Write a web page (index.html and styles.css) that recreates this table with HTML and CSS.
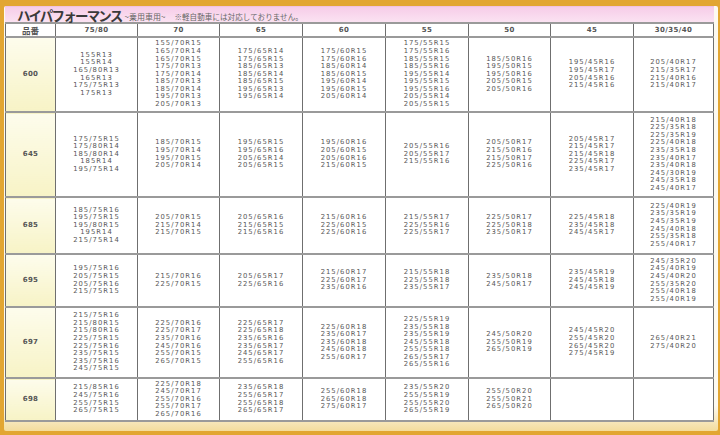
FILE: index.html
```html
<!DOCTYPE html>
<html lang="ja">
<head>
<meta charset="utf-8">
<link rel="stylesheet" href="styles.css">
</head>
<body>
<div class="frame">
  <div class="titlebar">
    <span class="title">ハイパフォーマンス</span>
    <span class="sub">~乗用車用~</span>
    <span class="note">※軽自動車には対応しておりません。</span>
  </div>
  <table class="chart">
    <colgroup>
      <col class="c-id"><col class="c82"><col class="c82"><col class="c83"><col class="c83"><col class="c83"><col class="c82"><col class="c83"><col class="c80">
    </colgroup>
    <thead>
      <tr class="head">
        <th class="jp">品番</th><th>75/80</th><th>70</th><th>65</th><th>60</th><th>55</th><th>50</th><th>45</th><th>30/35/40</th>
      </tr>
    </thead>
    <tbody>
      <tr class="r600">
        <td class="id">600</td>
        <td>155R13<br>155R14<br>165/80R13<br>165R13<br>175/75R13<br>175R13</td>
        <td>155/70R15<br>165/70R14<br>165/70R15<br>175/70R13<br>175/70R14<br>185/70R13<br>185/70R14<br>195/70R13<br>205/70R13</td>
        <td>175/65R14<br>175/65R15<br>185/65R13<br>185/65R14<br>185/65R15<br>195/65R13<br>195/65R14</td>
        <td>175/60R15<br>175/60R16<br>185/60R14<br>185/60R15<br>195/60R14<br>195/60R15<br>205/60R14</td>
        <td>175/55R15<br>175/55R16<br>185/55R15<br>185/55R16<br>195/55R14<br>195/55R15<br>195/55R16<br>205/55R14<br>205/55R15</td>
        <td>185/50R16<br>195/50R15<br>195/50R16<br>205/50R15<br>205/50R16</td>
        <td>195/45R16<br>195/45R17<br>205/45R16<br>215/45R16</td>
        <td>205/40R17<br>215/35R17<br>215/40R16<br>215/40R17</td>
      </tr>
      <tr class="r645">
        <td class="id">645</td>
        <td>175/75R15<br>175/80R14<br>185/80R14<br>185R14<br>195/75R14</td>
        <td>185/70R15<br>195/70R14<br>195/70R15<br>205/70R14</td>
        <td>195/65R15<br>195/65R16<br>205/65R14<br>205/65R15</td>
        <td>195/60R16<br>205/60R15<br>205/60R16<br>215/60R15</td>
        <td>205/55R16<br>205/55R17<br>215/55R16</td>
        <td>205/50R17<br>215/50R16<br>215/50R17<br>225/50R16</td>
        <td>205/45R17<br>215/45R17<br>215/45R18<br>225/45R17<br>235/45R17</td>
        <td>215/40R18<br>225/35R18<br>225/35R19<br>225/40R18<br>235/35R18<br>235/40R17<br>235/40R18<br>245/30R19<br>245/35R18<br>245/40R17</td>
      </tr>
      <tr class="r685">
        <td class="id">685</td>
        <td>185/75R16<br>195/75R15<br>195/80R15<br>195R14<br>215/75R14</td>
        <td>205/70R15<br>215/70R14<br>215/70R15</td>
        <td>205/65R16<br>215/65R15<br>215/65R16</td>
        <td>215/60R16<br>225/60R15<br>225/60R16</td>
        <td>215/55R17<br>225/55R16<br>225/55R17</td>
        <td>225/50R17<br>225/50R18<br>235/50R17</td>
        <td>225/45R18<br>235/45R18<br>245/45R17</td>
        <td>225/40R19<br>235/35R19<br>245/35R19<br>245/40R18<br>255/35R18<br>255/40R17</td>
      </tr>
      <tr class="r695">
        <td class="id">695</td>
        <td>195/75R16<br>205/75R15<br>205/75R16<br>215/75R15</td>
        <td>215/70R16<br>225/70R15</td>
        <td>205/65R17<br>225/65R16</td>
        <td>215/60R17<br>225/60R17<br>235/60R16</td>
        <td>215/55R18<br>225/55R18<br>235/55R17</td>
        <td>235/50R18<br>245/50R17</td>
        <td>235/45R19<br>245/45R18<br>245/45R19</td>
        <td>245/35R20<br>245/40R19<br>245/40R20<br>255/35R20<br>255/40R18<br>255/40R19</td>
      </tr>
      <tr class="r697">
        <td class="id">697</td>
        <td>215/75R16<br>215/80R15<br>215/80R16<br>225/75R15<br>225/75R16<br>235/75R15<br>235/75R16<br>245/75R15</td>
        <td>225/70R16<br>225/70R17<br>235/70R16<br>245/70R16<br>255/70R15<br>265/70R15</td>
        <td>225/65R17<br>225/65R18<br>235/65R16<br>235/65R17<br>245/65R17<br>255/65R16</td>
        <td>225/60R18<br>235/60R17<br>235/60R18<br>245/60R18<br>255/60R17</td>
        <td>225/55R19<br>235/55R18<br>235/55R19<br>245/55R18<br>255/55R18<br>265/55R17<br>265/55R16</td>
        <td>245/50R20<br>255/50R19<br>265/50R19</td>
        <td>245/45R20<br>255/45R20<br>265/45R20<br>275/45R19</td>
        <td>265/40R21<br>275/40R20</td>
      </tr>
      <tr class="r698">
        <td class="id">698</td>
        <td>215/85R16<br>245/75R16<br>255/75R15<br>265/75R15</td>
        <td>225/70R18<br>245/70R17<br>255/70R16<br>255/70R17<br>265/70R16</td>
        <td>235/65R18<br>255/65R17<br>255/65R18<br>265/65R17</td>
        <td>255/60R18<br>265/60R18<br>275/60R17</td>
        <td>235/55R20<br>255/55R19<br>255/55R20<br>265/55R19</td>
        <td>255/50R20<br>255/50R21<br>265/50R20</td>
        <td></td>
        <td></td>
      </tr>
    </tbody>
  </table>
</div>
</body>
</html>
```

FILE: styles.css
```css
html, body {
  margin: 0;
  padding: 0;
}
body {
  width: 720px;
  height: 435px;
  overflow: hidden;
  background: #e2a632;
  font-family: "DejaVu Sans", "Noto Sans CJK JP", sans-serif;
}
.frame {
  margin: 6px 2px 0 4px;
  padding: 0 4px 9px 1px;
  background: linear-gradient(#fdfaf0, #fdfaf0 94%, #f3dc9c);
  border-radius: 2px;
}
.titlebar {
  height: 16px;
  display: flex;
  align-items: center;
  padding-left: 12px;
  background: linear-gradient(#f6cde8, #fbe2f2);
  border-top: 1px solid #f1c2df;
  box-sizing: border-box;
}
.title {
  font-family: "Noto Sans CJK JP", sans-serif;
  font-weight: 700;
  font-size: 13.5px;
  letter-spacing: -1.8px;
  color: #3a3a3a;
  line-height: 14px;
}
.sub {
  font-family: "Noto Sans CJK JP", sans-serif;
  font-size: 8px;
  color: #666;
  margin-left: 3px;
  margin-top: 3px;
}
.note {
  font-family: "Noto Sans CJK JP", sans-serif;
  font-size: 7.5px;
  letter-spacing: 0.1px;
  color: #666;
  margin-left: 9px;
  margin-top: 3px;
}
.chart {
  width: 708px;
  table-layout: fixed;
  border-collapse: collapse;
  background: #fff;
}
.c-id { width: 50px; }
.c82 { width: 82px; }
.c83 { width: 83px; }
.c80 { width: 80px; }
.chart th, .chart td {
  border-left: 1px solid #6f6f6f;
  border-right: 1px solid #6f6f6f;
  border-top: 2px solid #9a9a9a;
  border-bottom: 2px solid #9a9a9a;
  padding: 0;
  text-align: center;
  vertical-align: middle;
}
.chart th {
  height: 12px;
  font-size: 7px;
  font-weight: 700;
  color: #555;
  letter-spacing: 0.4px;
  line-height: 10px;
  background: #fff;
}
.chart th.jp {
  font-family: "Noto Sans CJK JP", sans-serif;
  font-size: 8.5px;
  letter-spacing: 0;
}
.chart td {
  font-size: 6.8px;
  line-height: 7.6px;
  letter-spacing: 1.05px;
  color: #575757;
}
.chart td.id {
  background: linear-gradient(#fdfcec, #f7f3c6);
  font-weight: 700;
  font-size: 7px;
  letter-spacing: 0.3px;
  color: #555;
}
.r600 td { height: 73px; }
.r645 td { height: 83px; }
.r685 td { height: 55px; }
.r695 td { height: 51px; }
.r697 td { height: 69px; }
.r698 td { height: 41px; }
```
